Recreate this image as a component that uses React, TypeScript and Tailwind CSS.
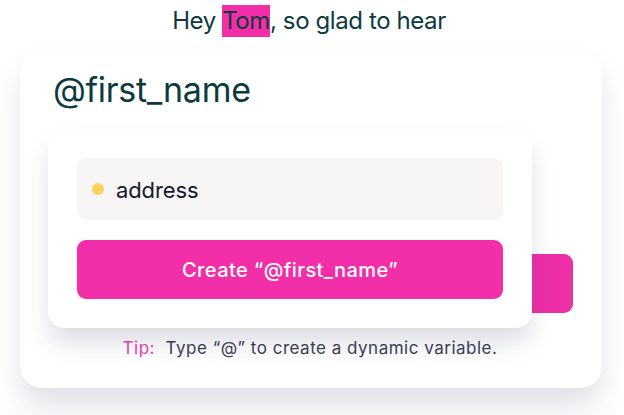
import React from "react";

export default function App() {
  return (
    <div
      className="relative w-[624px] h-[415px] overflow-hidden bg-white flex flex-col"
      style={{ fontFamily: "Inter, 'Liberation Sans', sans-serif" }}
    >
      <h1 className="mt-[5px] text-center text-[24px] leading-[32px] text-[#0c3a3f] tracking-[-0.4px] pr-[6px]">
        Hey <span className="inline-block bg-[#f22ea8] leading-[32px]">Tom</span>, so glad to hear
      </h1>
      <div className="relative ml-[20px] mt-[13px] w-[582px] h-[338px] rounded-[22px] bg-white shadow-[0_20px_30px_-2px_rgba(40,50,90,0.15)] flex flex-col px-[28px]">
        <div className="mt-[20px] pl-[5px] text-[34px] leading-[40px] text-[#0c3a3f] tracking-[-0.3px]">
          @first_name
        </div>
        <div className="mt-[144px] h-[59px] w-[525px] rounded-[9px] bg-[#ee2fa7]" />
        <div className="mt-[25px] text-center text-[17px] leading-[20px] text-[#3b4057] tracking-[0.5px] pr-[2px]">
          <span className="text-[#e845ad]">Tip:</span>&nbsp; Type “@” to create a dynamic variable.
        </div>

        <div className="absolute left-[28px] top-[79px] w-[484px] rounded-[16px] bg-white p-[29px] flex flex-col gap-[20px] shadow-[0_16px_24px_-2px_rgba(40,50,90,0.17)]">
          <div className="h-[62px] rounded-[9px] bg-[#f7f6f5] flex items-center pl-[15px] gap-[12px] pt-[3px]">
            <span className="w-[12px] h-[12px] rounded-full bg-[#fdd25e] -mt-[3px]" />
            <span className="text-[22px] text-[#161a2e] tracking-[-0.1px]">address</span>
          </div>
          <div className="h-[59px] rounded-[9px] bg-[#f22ea8] flex items-center justify-center text-white text-[20px] font-medium tracking-[0.4px]">
            Create “@first_name”
          </div>
        </div>
      </div>
    </div>
  );
}
